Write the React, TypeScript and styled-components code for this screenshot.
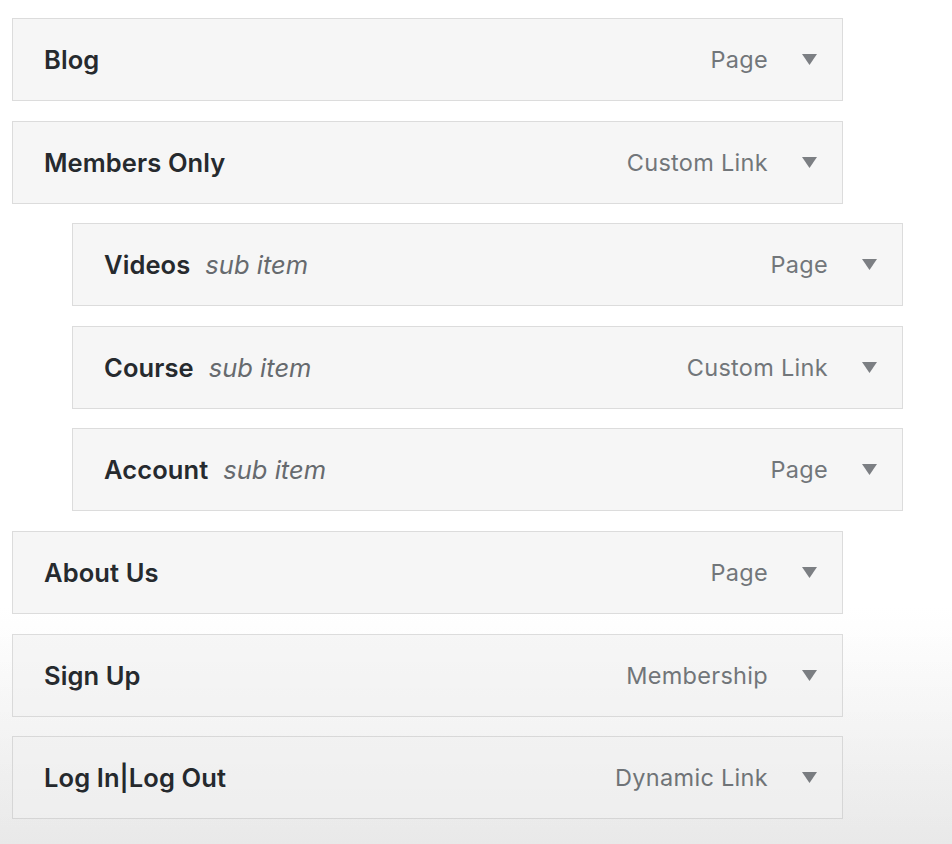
import styled, { createGlobalStyle } from 'styled-components';

const GlobalStyle = createGlobalStyle`
  html, body {
    margin: 0;
    padding: 0;
  }

  body {
    min-height: 844px;
    background: linear-gradient(to bottom, #ffffff 0%, #ffffff 72%, #f1f1f1 100%);
    font-family: Inter, 'Noto Sans', 'Liberation Sans', sans-serif;
  }
`;

const Page = styled.main`
  position: relative;
  min-height: 844px;
  padding: 18px 0 0 12px;
  box-sizing: border-box;

  &::after {
    content: '';
    position: absolute;
    inset: 0;
    pointer-events: none;
    background: linear-gradient(to bottom, rgba(0, 0, 0, 0) 74%, rgba(0, 0, 0, 0.035) 100%);
  }
`;

const MenuList = styled.ul`
  list-style: none;
  margin: 0;
  padding: 0;
  display: flex;
  flex-direction: column;
  gap: 19.6px;
`;

const MenuItem = styled.li<{ $depth: number }>`
  width: 831px;
  height: 83px;
  margin-left: ${({ $depth }) => $depth * 60}px;
  box-sizing: border-box;
  display: flex;
  align-items: center;
  padding: 0 25px 0 31px;
  background: #f6f6f6;
  border: 1.5px solid #dcdcdc;
`;

const Title = styled.span`
  font-size: 25.5px;
  font-weight: 600;
  color: #262a2e;
  letter-spacing: 0.1px;
`;

const SubLabel = styled.em`
  margin-left: 15px;
  font-size: 25.5px;
  font-weight: 400;
  color: #666a6e;
`;

const ItemType = styled.span`
  margin-left: auto;
  font-size: 23.5px;
  color: #72767a;
  letter-spacing: 0.3px;
`;

const Toggle = styled.button`
  margin-left: 33px;
  width: 16px;
  height: 14px;
  padding: 0;
  border: 0;
  background: none;
  display: flex;
  align-items: center;
  justify-content: center;
  color: #7c7f83;
  cursor: pointer;
`;

interface Item {
  title: string;
  type: string;
  depth: number;
}

const items: Item[] = [
  { title: 'Blog', type: 'Page', depth: 0 },
  { title: 'Members Only', type: 'Custom Link', depth: 0 },
  { title: 'Videos', type: 'Page', depth: 1 },
  { title: 'Course', type: 'Custom Link', depth: 1 },
  { title: 'Account', type: 'Page', depth: 1 },
  { title: 'About Us', type: 'Page', depth: 0 },
  { title: 'Sign Up', type: 'Membership', depth: 0 },
  { title: 'Log In|Log Out', type: 'Dynamic Link', depth: 0 },
];

export default function App() {
  return (
    <>
      <GlobalStyle />
      <Page>
        <MenuList>
          {items.map((item) => (
            <MenuItem key={item.title} $depth={item.depth}>
              <Title>{item.title}</Title>
              {item.depth > 0 && <SubLabel>sub item</SubLabel>}
              <ItemType>{item.type}</ItemType>
              <Toggle aria-label={`Edit ${item.title}`}>
                <svg width='15' height='11' viewBox='0 0 15 11'>
                  <path d='M0 0 H15 L7.5 11 Z' fill='currentColor' />
                </svg>
              </Toggle>
            </MenuItem>
          ))}
        </MenuList>
      </Page>
    </>
  );
}
